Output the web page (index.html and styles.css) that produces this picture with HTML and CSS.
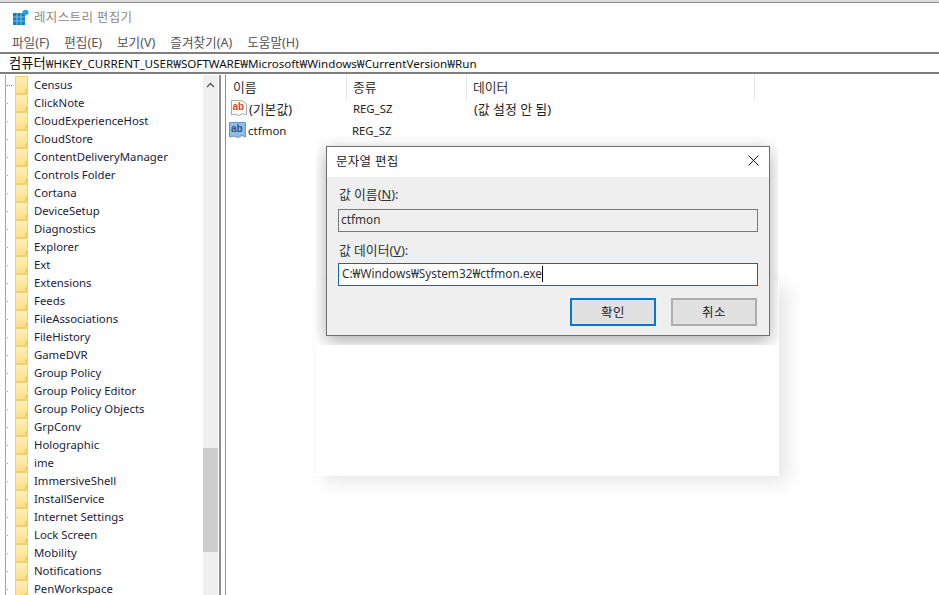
FILE: index.html
```html
<!DOCTYPE html>
<html lang="ko">
<head>
<meta charset="utf-8">
<title>레지스트리 편집기</title>
<link rel="stylesheet" href="styles.css">
</head>
<body>
<svg width="0" height="0" class="defs">
  <defs>
    <linearGradient id="fg" x1="0" y1="0" x2="0" y2="1">
      <stop offset="0" stop-color="#ffefb8"/>
      <stop offset="1" stop-color="#ffdf85"/>
    </linearGradient>
  </defs>
  <symbol id="folder" viewBox="0 0 13 18">
    <path d="M.5.5H12.500V17.500H.5Z" fill="url(#fg)" stroke="#f3d06f"/>
    <path d="M10 13H12.500V17.500H10Z" fill="#f4cc62"/>
  </symbol>
</svg>
<div class="app">
  <header class="titlebar">
    <svg class="appicon" width="18" height="17" viewBox="0 0 18 17">
      <path d="M1 4H13V16H1Z" fill="#0f7fc4"/>
      <path d="M5 4V16M9 4V16M1 8H13M1 12H13" stroke="#7cc0e6" stroke-width="1"/>
      <path d="M13.500 .5L16.500 2V5L13.500 6.500L10.500 5V2Z" fill="#2aa3dc"/>
    </svg>
    <span class="apptitle">레지스트리 편집기</span>
  </header>
  <nav class="menubar">
    <span>파일(F)</span><span>편집(E)</span><span>보기(V)</span><span>즐겨찾기(A)</span><span>도움말(H)</span>
  </nav>
  <div class="address"><span class="addrroot">컴퓨터</span>₩HKEY_CURRENT_USER₩SOFTWARE₩Microsoft₩Windows₩CurrentVersion₩Run</div>
  <main class="panes">
    <aside class="tree">
      <ul class="treelist">
        <li><i class="dots wide"></i><svg class="fld"><use href="#folder"/></svg>Census</li>
        <li><i class="dots"></i><svg class="fld"><use href="#folder"/></svg>ClickNote</li>
        <li><i class="dots"></i><svg class="fld"><use href="#folder"/></svg>CloudExperienceHost</li>
        <li><i class="dots"></i><svg class="fld"><use href="#folder"/></svg>CloudStore</li>
        <li><i class="dots"></i><svg class="fld"><use href="#folder"/></svg>ContentDeliveryManager</li>
        <li><i class="dots"></i><svg class="fld"><use href="#folder"/></svg>Controls Folder</li>
        <li><i class="dots"></i><svg class="fld"><use href="#folder"/></svg>Cortana</li>
        <li><i class="dots"></i><svg class="fld"><use href="#folder"/></svg>DeviceSetup</li>
        <li><i class="dots"></i><svg class="fld"><use href="#folder"/></svg>Diagnostics</li>
        <li><i class="dots"></i><svg class="fld"><use href="#folder"/></svg>Explorer</li>
        <li><i class="dots"></i><svg class="fld"><use href="#folder"/></svg>Ext</li>
        <li><i class="dots"></i><svg class="fld"><use href="#folder"/></svg>Extensions</li>
        <li><i class="dots"></i><svg class="fld"><use href="#folder"/></svg>Feeds</li>
        <li><i class="dots"></i><svg class="fld"><use href="#folder"/></svg>FileAssociations</li>
        <li><i class="dots"></i><svg class="fld"><use href="#folder"/></svg>FileHistory</li>
        <li><i class="dots"></i><svg class="fld"><use href="#folder"/></svg>GameDVR</li>
        <li><i class="dots"></i><svg class="fld"><use href="#folder"/></svg>Group Policy</li>
        <li><i class="dots"></i><svg class="fld"><use href="#folder"/></svg>Group Policy Editor</li>
        <li><i class="dots"></i><svg class="fld"><use href="#folder"/></svg>Group Policy Objects</li>
        <li><i class="dots"></i><svg class="fld"><use href="#folder"/></svg>GrpConv</li>
        <li><i class="dots"></i><svg class="fld"><use href="#folder"/></svg>Holographic</li>
        <li><i class="dots"></i><svg class="fld"><use href="#folder"/></svg>ime</li>
        <li><i class="dots"></i><svg class="fld"><use href="#folder"/></svg>ImmersiveShell</li>
        <li><i class="dots"></i><svg class="fld"><use href="#folder"/></svg>InstallService</li>
        <li><i class="dots"></i><svg class="fld"><use href="#folder"/></svg>Internet Settings</li>
        <li><i class="dots"></i><svg class="fld"><use href="#folder"/></svg>Lock Screen</li>
        <li><i class="dots"></i><svg class="fld"><use href="#folder"/></svg>Mobility</li>
        <li><i class="dots"></i><svg class="fld"><use href="#folder"/></svg>Notifications</li>
        <li><i class="dots"></i><svg class="fld"><use href="#folder"/></svg>PenWorkspace</li>
      </ul>
      <div class="scrollbar">
        <svg class="uparrow" width="9" height="6" viewBox="0 0 9 6"><path d="M1 5L4.500 1.500L8 5" fill="none" stroke="#606060" stroke-width="1.500"/></svg>
        <div class="thumb"></div>
      </div>
    </aside>
    <section class="values">
      <div class="colhead">
        <span class="col c1">이름</span><span class="col c2">종류</span><span class="col c3">데이터</span>
      </div>
      <div class="row first">
        <svg class="abicon" width="18" height="18" viewBox="0 0 18 18">
          <path d="M1.500 1.500H12L16.500 5V16L13 14.500L9 16.500L5 15L1.500 16Z" fill="#fff" stroke="#a9a9a9"/>
          <text x="2.500" y="11" class="abred">ab</text>
        </svg>
        <span class="vname">(기본값)</span><span class="vtype">REG_SZ</span><span class="vdata">(값 설정 안 됨)</span>
      </div>
      <div class="row second">
        <svg class="abicon" width="18" height="18" viewBox="0 0 18 18">
          <path d="M.5 1.500H16.500V16L13 14.500L9 16.500L5 15L.5 16Z" fill="#8ebde6" stroke="#5a9ad4"/>
          <text x="2" y="11" class="abblue">ab</text>
        </svg>
        <span class="vname">ctfmon</span><span class="vtype">REG_SZ</span>
      </div>
    </section>
  </main>
</div>
<div class="ghost"></div>
<div class="dialog">
  <div class="dlgtitle">
    <span>문자열 편집</span>
    <svg width="11" height="11" viewBox="0 0 11 11"><path d="M.5.5L10.500 10.500M10.500.5L.5 10.500" stroke="#111" stroke-width="1"/></svg>
  </div>
  <div class="dlgbody">
    <label class="lbl lbl1">값 이름(<u>N</u>):</label>
    <div class="field ro f1">ctfmon</div>
    <label class="lbl lbl2">값 데이터(<u>V</u>):</label>
    <div class="field active"><span>C:₩Windows₩System32₩ctfmon.exe</span><i class="caret"></i></div>
    <div class="buttons">
      <div class="btn ok">확인</div>
      <div class="btn">취소</div>
    </div>
  </div>
</div>
</body>
</html>
```

FILE: styles.css
```css
* { box-sizing: border-box; }
html, body { margin: 0; height: 100%; overflow: hidden; background: #fff; }
body { font-family: "Noto Sans", "Noto Sans CJK KR", sans-serif; font-size: 11.35px; color: #1a1a1a; position: relative; }
.defs { position: absolute; }
.app { height: 595px; display: flex; flex-direction: column; border-top: 2px solid #dcdcdc; }
.titlebar { height: 30px; border-top: 1px solid #8c8c8c; display: flex; align-items: center; padding-left: 12px; gap: 4px; }
.apptitle { color: #8a8a8a; font-size: 12.5px; letter-spacing: .35px; position: relative; top: -1px; }
.appicon { flex: none; }
.menubar { height: 20px; display: flex; gap: 15px; padding-left: 12px; align-items: center; color: #555; font-size: 12.6px; position: relative; top: -1px; }
.address { height: 22px; border-top: 2px solid #7f7f7f; border-bottom: 2px solid #7f7f7f; padding-left: 9px; line-height: 18px; white-space: nowrap; color: #111; font-size: 11.62px; }
.addrroot { font-size: 13.3px; }
.panes { flex: 1; display: flex; min-height: 0; padding-left: 5px; padding-top: 1px; }
.tree { width: 216px; flex: none; display: flex; border-left: 1px solid #a5a5a5; border-right: 2px solid #8f8f8f; overflow: hidden; }
.treelist { list-style: none; margin: 1px 0 0; padding: 0; flex: 1; min-width: 0; overflow: hidden; }
.treelist li { height: 18px; display: flex; align-items: center; white-space: nowrap; line-height: 18px; color: #1c1c3a; }
.dots { width: 1px; height: 1px; background: #9a9a9a; margin-left: 1px; margin-right: 7px; flex: none; }
.dots.wide { width: 5px; margin-right: 3px; background: repeating-linear-gradient(90deg, #777 0 1px, transparent 1px 2px); }
.fld { width: 13px; height: 18px; margin-right: 6px; flex: none; }
.scrollbar { width: 15px; margin-right: 1px; flex: none; background: #f0f0f0; position: relative; }
.uparrow { position: absolute; left: 3px; top: 7px; }
.thumb { position: absolute; left: 0; top: 373px; width: 100%; height: 104px; background: #cdcdcd; }
.values { flex: 1; margin-left: 4px; border-left: 1px solid #8f8f8f; padding-left: 1px; }
.colhead { height: 22px; display: flex; color: #333; font-size: 12.8px; }
.col { height: 24px; line-height: 25px; border-right: 1px solid #e5e5e5; padding-left: 6px; flex: none; }
.c1 { width: 120px; }
.c2 { width: 120px; }
.c3 { width: 288px; }
.row { height: 22px; display: flex; align-items: center; white-space: nowrap; color: #222; }
.abicon { flex: none; margin-left: 3px; }
.row.second .abicon { margin-left: 2px; }
.abred { font: bold 10px "Liberation Sans", sans-serif; fill: #d8481f; }
.abblue { font: bold 10px "Liberation Sans", sans-serif; fill: #3c4f8c; }
.vname { width: 104px; margin-left: 1px; flex: none; font-size: 12.8px; }
.row.second .vname { margin-left: 1px; width: 65px; font-size: 11.5px; }
.row.first .vtype { width: 121px; flex: none; }
.row.second .vtype { margin-left: 39px; }
.vdata { font-size: 12.9px; }
.ghost { position: absolute; left: 316px; top: 280px; width: 463px; height: 196px; background: #fff; box-shadow: 8px 6px 18px rgba(0,0,0,.1); }
.dialog { position: absolute; left: 326px; top: 146px; width: 444px; height: 190px; border: 1px solid #6e6e6e; background: #efefef; box-shadow: 0 5px 16px rgba(0,0,0,.32); clip-path: inset(-10px -8px -9px -10px); display: flex; flex-direction: column; }
.dlgtitle { height: 30px; padding: 0 10px 3px 9px; background: #fff; display: flex; align-items: center; justify-content: space-between; color: #222; letter-spacing: .3px; font-size: 12.5px; flex: none; }
.dlgbody { flex: 1; padding: 0 11px; display: flex; flex-direction: column; }
.lbl { display: block; height: 18px; line-height: 18px; color: #333; font-size: 12.8px; padding-left: 1px; }
.lbl1 { margin-top: 8px; }
.lbl2 { margin-top: 9px; }
.field { height: 23px; margin-top: 4px; line-height: 19px; padding-left: 2px; border: 1px solid #7a7a7a; display: flex; white-space: nowrap; color: #333; flex: none; font-size: 11.8px; }
.field.f1 { margin-top: 6px; }
.field.ro { background: #efefef; }
.field.active { background: #fff; border-color: #0a6cb8; padding-left: 3px; }
.caret { width: 1px; height: 16px; margin-top: 2px; background: #000; }
.buttons { display: flex; justify-content: flex-end; gap: 15px; margin-top: 12px; padding-right: 1px; }
.btn { width: 86px; height: 28px; padding-bottom: 2px; background: #e1e1e1; border: 2px solid #adadad; display: flex; align-items: center; justify-content: center; color: #222; letter-spacing: .5px; font-size: 12.5px; }
.btn.ok { border-color: #0078d7; }
```
